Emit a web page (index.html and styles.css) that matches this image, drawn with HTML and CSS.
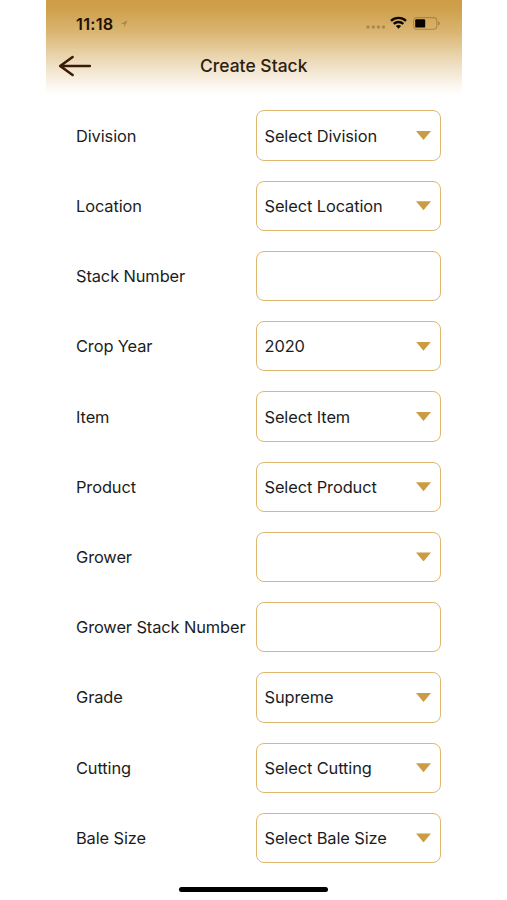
FILE: index.html
```html
<!DOCTYPE html>
<html lang="en">
<head>
<meta charset="utf-8">
<title>Create Stack</title>
<link rel="stylesheet" href="styles.css">
</head>
<body>
<main class="phone">
  <header class="header">
    <div class="status">
      <span class="time">11:18</span>
      <svg class="locator" width="8" height="8" viewBox="0 0 8 8"><path d="M.4 3.7 7.4.6 4.3 7.5V3.7Z"/></svg>
      <svg class="indicators" width="76" height="16" viewBox="0 0 76 16">
        <g fill="#a98851"><circle cx="3" cy="12" r="1.7"/><circle cx="8.3" cy="12" r="1.7"/><circle cx="13.4" cy="12" r="1.7"/><circle cx="18.5" cy="12" r="1.7"/></g>
        <g fill="none" stroke="#0b0703" stroke-width="2.3"><path d="M26 5.8a11 11 0 0 1 15 0"/><path d="M28.7 8.9a7 7 0 0 1 9.6 0"/></g>
        <path d="M30.9 11.1a4 4 0 0 1 5.2 0L33.5 13.8Z" fill="#0b0703"/>
        <rect x="48.6" y="2.6" width="23.2" height="11.6" rx="3.2" fill="none" stroke="#ab8646" stroke-width="1.1"/>
        <rect x="50.2" y="4.2" width="10" height="8.4" rx="1.2" fill="#070401"/>
        <path d="M73 6.3q2 .6 2 2.1t-2 2.1Z" fill="#ab8646"/>
      </svg>
    </div>
    <div class="titlebar">
      <svg class="back" width="34" height="24" viewBox="0 0 34 24"><path d="M14.6 3 2.2 12l12.4 9M2.6 12H31.8"/></svg>
      <h1 class="title">Create Stack</h1>
    </div>
  </header>
  <section class="form">
    <div class="row"><span class="label">Division</span><div class="field">Select Division<i class="caret"></i></div></div>
    <div class="row"><span class="label">Location</span><div class="field">Select Location<i class="caret"></i></div></div>
    <div class="row"><span class="label">Stack Number</span><div class="field"></div></div>
    <div class="row"><span class="label">Crop Year</span><div class="field">2020<i class="caret"></i></div></div>
    <div class="row"><span class="label">Item</span><div class="field">Select Item<i class="caret"></i></div></div>
    <div class="row"><span class="label">Product</span><div class="field">Select Product<i class="caret"></i></div></div>
    <div class="row"><span class="label">Grower</span><div class="field"><i class="caret"></i></div></div>
    <div class="row"><span class="label">Grower Stack Number</span><div class="field"></div></div>
    <div class="row"><span class="label">Grade</span><div class="field">Supreme<i class="caret"></i></div></div>
    <div class="row"><span class="label">Cutting</span><div class="field">Select Cutting<i class="caret"></i></div></div>
    <div class="row"><span class="label">Bale Size</span><div class="field">Select Bale Size<i class="caret"></i></div></div>
  </section>
  <div class="home-indicator"></div>
</main>
</body>
</html>
```
FILE: styles.css
```css
* { box-sizing: border-box; }
body {
  margin: 0;
  background: #fff;
  color: #1c1c1e;
  font: 400 16.4px/20px Inter, "Liberation Sans", sans-serif;
  letter-spacing: -0.1px;
}
.phone {
  width: 415.5px;
  height: 900px;
  margin-left: 46px;
  display: flex;
  flex-direction: column;
}
.header {
  height: 96px;
  flex: none;
  background: linear-gradient(#cd9c45 0, #d0a250 12%, #dab673 34%, #e7cfa2 54%, #f3e6d1 74%, #fdfaf6 93%, #fff 100%);
}
.status {
  height: 46px;
  padding: 1px 20.5px 0 30px;
  display: flex;
  align-items: center;
}
.time {
  width: 39px;
  color: #1c1203;
  font-size: 16.3px;
  font-weight: 600;
  letter-spacing: 0.25px;
}
.locator {
  margin-left: 5px;
  fill: #a98449;
}
.indicators {
  margin: -1px 0 0 auto;
}
.titlebar {
  height: 39px;
  display: grid;
  grid-template-columns: 46px 1fr 46px;
  align-items: center;
}
.back {
  margin-left: 12px;
  fill: none;
  stroke: #3a1c08;
  stroke-width: 2.6;
  stroke-linecap: round;
  stroke-linejoin: round;
}
.title {
  margin: 0;
  color: #2b2010;
  font-size: 17.4px;
  font-weight: 450;
  letter-spacing: 0.05px;
  text-align: center;
}
.form {
  padding: 14.4px 20.5px 0 30px;
  display: grid;
  row-gap: 19.9px;
}
.row {
  height: 50.35px;
  display: grid;
  grid-template-columns: 1fr 185px;
  align-items: center;
}
.label { white-space: nowrap; }
.field {
  height: 100%;
  padding: 0 9px 0 7.5px;
  display: flex;
  align-items: center;
  white-space: nowrap;
  border: 1.3px solid #dfb76f;
  border-radius: 8px;
}
.caret {
  width: 15px;
  height: 9px;
  margin-left: auto;
  background: #cc9c45;
  clip-path: polygon(0 0, 100% 0, 50% 100%);
}
.home-indicator {
  width: 149px;
  height: 5px;
  margin: 24px 0 0 133px;
  border-radius: 3px;
  background: #000;
}
```
